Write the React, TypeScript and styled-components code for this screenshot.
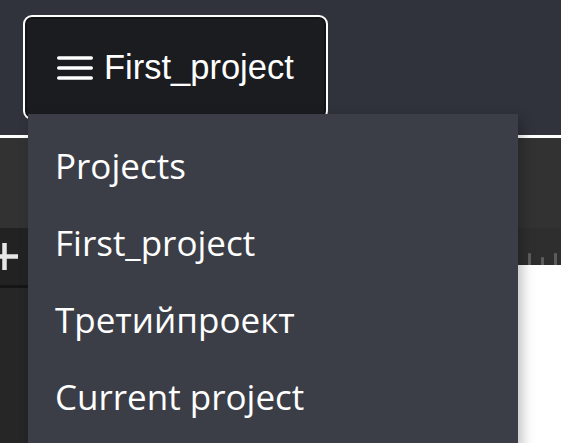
import React from 'react';
import styled, {createGlobalStyle} from 'styled-components';

const GlobalStyle = createGlobalStyle`
  html, body {
    margin: 0;
    height: 100%;
    overflow: hidden;
  }
  #root {
    height: 100%;
  }
`;

const Page = styled.div`
  position: relative;
  display: flex;
  flex-direction: column;
  height: 100vh;
  background: #262626;
`;

const Header = styled.header`
  display: flex;
  align-items: flex-start;
  height: 138px;
  padding: 15px 23px 0;
  box-sizing: border-box;
  background: #30333b;
  border-bottom: 3px solid #ffffff;
  flex-shrink: 0;
`;

const ProjectButton = styled.button`
  display: flex;
  align-items: center;
  gap: 11px;
  height: 105px;
  padding: 0 32px;
  box-sizing: border-box;
  background: #1b1c20;
  border: 2px solid #ffffff;
  border-radius: 9px;
  box-shadow: inset 0 0 0 2px #131416;
  color: #ffffff;
  font-family: 'Liberation Sans', Arial, sans-serif;
  font-size: 34.5px;
  cursor: pointer;
`;

const Toolbar = styled.div`
  height: 90px;
  flex-shrink: 0;
  background: #323232;
`;

const Workspace = styled.div`
  display: flex;
  flex: 1;
  min-height: 0;
`;

const Sidebar = styled.aside`
  display: flex;
  flex-direction: column;
  width: 260px;
  background: #262626;
`;

const SidebarHead = styled.div`
  display: flex;
  align-items: center;
  height: 57px;
  background: #222222;
  box-shadow: 0 3px 0 #151515;
`;

const AddIcon = styled.svg`
  display: block;
  width: 20px;
  height: 30px;
`;

const Main = styled.main`
  display: flex;
  flex-direction: column;
  flex: 1;
`;

const Ruler = styled.div`
  display: flex;
  align-items: flex-end;
  justify-content: flex-end;
  gap: 10px;
  height: 37px;
  padding-right: 4px;
  background: #2e2e2e;
`;

const Tick = styled.span<{tall: boolean}>`
  width: 3px;
  height: ${(props) => (props.tall ? 12 : 8)}px;
  background: #5c5c5c;
  border-radius: 1px 1px 0 0;
`;

const Canvas = styled.div`
  flex: 1;
  background: #ffffff;
`;

const Dropdown = styled.ul`
  position: absolute;
  top: 114px;
  left: 28px;
  width: 490px;
  height: 360px;
  margin: 0;
  padding: 13px 0 0;
  list-style: none;
  background: #3b3e47;
  box-shadow: 4px 4px 12px rgba(0, 0, 0, 0.25);
`;

const DropdownItem = styled.li`
  height: 77px;
  padding: 0 27px;
  line-height: 77px;
  color: #ffffff;
  font-family: 'Open Sans', 'Noto Sans', sans-serif;
  font-size: 35px;
  white-space: nowrap;
`;

const HamburgerIcon = () => (
  <svg width="36" height="26" viewBox="0 0 36 26">
    <g stroke="#ffffff" strokeWidth="3.4" strokeLinecap="round">
      <line x1="1.7" y1="3" x2="34.3" y2="3" />
      <line x1="1.7" y1="13" x2="34.3" y2="13" />
      <line x1="1.7" y1="23" x2="34.3" y2="23" />
    </g>
  </svg>
);

const projects = ['Projects', 'First_project', 'Третийпроект', 'Current project'];
const ticks = [false, true, false, true];

const App = (): JSX.Element => {
  return (
    <Page>
      <GlobalStyle />
      <Header>
        <ProjectButton>
          <HamburgerIcon />
          First_project
        </ProjectButton>
      </Header>
      <Toolbar />
      <Workspace>
        <Sidebar>
          <SidebarHead>
            <AddIcon viewBox="0 0 20 30">
              <g stroke="#e6e6e6" strokeWidth="4.5">
                <line x1="4.5" y1="1" x2="4.5" y2="28" />
                <line x1="-9" y1="14.5" x2="18" y2="14.5" />
              </g>
            </AddIcon>
          </SidebarHead>
        </Sidebar>
        <Main>
          <Ruler>
            {ticks.map((tall, i) => (
              <Tick key={i} tall={tall} />
            ))}
          </Ruler>
          <Canvas />
        </Main>
      </Workspace>
      <Dropdown>
        {projects.map((name) => (
          <DropdownItem key={name}>{name}</DropdownItem>
        ))}
      </Dropdown>
    </Page>
  );
};

export default App;
